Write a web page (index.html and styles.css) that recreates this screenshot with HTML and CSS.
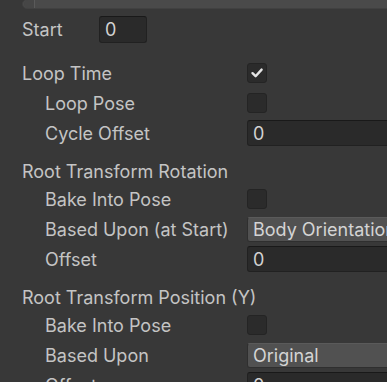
FILE: index.html
```html
<!DOCTYPE html>
<html lang="en">
<head>
    <meta charset="UTF-8">
    <title>Animation Clip Inspector</title>
    <link rel="stylesheet" href="styles.css">
</head>
<body>
    <div class="slider"><div class="slider-fill"></div></div>

    <div class="row start-row">
        <label class="label">Start</label>
        <div class="field small">0</div>
    </div>

    <div class="row heading">
        <label class="label">Loop Time</label>
        <div class="control">
            <div class="checkbox checked">
                <svg viewBox="0 0 20 20" width="20" height="20"><path d="M5.5 10.2 L8.6 13.2 L14.6 6.6" fill="none" stroke="#e4e4e4" stroke-width="2.4" stroke-linecap="round" stroke-linejoin="round"/></svg>
            </div>
        </div>
    </div>
    <div class="row child">
        <label class="label">Loop Pose</label>
        <div class="control"><div class="checkbox"></div></div>
    </div>
    <div class="row child">
        <label class="label">Cycle Offset</label>
        <div class="control"><div class="field">0</div></div>
    </div>

    <div class="section">
        <div class="title">Root Transform Rotation</div>
        <div class="row child">
            <label class="label">Bake Into Pose</label>
            <div class="control"><div class="checkbox"></div></div>
        </div>
        <div class="row child">
            <label class="label">Based Upon (at Start)</label>
            <div class="control"><div class="dropdown">Body Orientation</div></div>
        </div>
        <div class="row child">
            <label class="label">Offset</label>
            <div class="control"><div class="field">0</div></div>
        </div>
    </div>

    <div class="section">
        <div class="title">Root Transform Position (Y)</div>
        <div class="row child">
            <label class="label">Bake Into Pose</label>
            <div class="control"><div class="checkbox"></div></div>
        </div>
        <div class="row child">
            <label class="label">Based Upon</label>
            <div class="control"><div class="dropdown">Original</div></div>
        </div>
        <div class="row child">
            <label class="label">Offset</label>
            <div class="control"><div class="field">0</div></div>
        </div>
    </div>
</body>
</html>
```

FILE: styles.css
```css
html, body {
    margin: 0;
    height: 100%;
    overflow: hidden;
}
body {
    background-color: #383838;
    font-family: Inter, "Noto Sans", sans-serif;
    font-size: 18px;
    color: #c4c4c4;
    padding-left: 22px;
    width: 420px;
}
.slider {
    height: 10px;
    margin-top: -1px;
    margin-right: -40px;
    background-color: #4a4a4a;
    border: 1px solid #414141;
    border-radius: 6px;
    display: flex;
    box-sizing: border-box;
}
.slider-fill {
    width: 10px;
    margin-left: 1px;
    border-right: 1px solid #5a5a5a;
    background-color: #464646;
    border-radius: 5px 0 0 5px;
}
.row {
    display: flex;
    align-items: center;
    height: 30px;
}
.label {
    width: 225px;
    flex-shrink: 0;
    white-space: nowrap;
}
.start-row {
    margin-top: 5px;
    margin-bottom: 14px;
}
.start-row .label {
    width: 77px;
}
.child .label {
    padding-left: 23px;
    width: 202px;
}
.control {
    flex: 1;
    display: flex;
    align-items: center;
}
.section {
    margin-top: 12px;
}
.title {
    height: 24px;
    line-height: 24px;
    white-space: nowrap;
}
.checkbox {
    width: 20px;
    height: 20px;
    box-sizing: border-box;
    background-color: #2b2b2b;
    border: 1px solid #242424;
    border-radius: 3px;
    display: flex;
}
.checkbox svg {
    margin: -1px;
}
.field {
    height: 26px;
    line-height: 26px;
    box-sizing: border-box;
    flex: 1;
    min-width: 200px;
    padding-left: 5px;
    background-color: #2a2a2a;
    border: 1px solid #212121;
    border-top-color: #191919;
    border-radius: 3px;
    color: #d2d2d2;
}
.field.small {
    flex: none;
    min-width: 0;
    width: 48px;
    height: 27px;
    line-height: 25px;
}
.dropdown {
    height: 25px;
    line-height: 23px;
    box-sizing: border-box;
    flex: 1;
    min-width: 200px;
    padding-left: 5px;
    background-color: #515151;
    border: 1px solid #2f2f2f;
    border-top-color: #5a5a5a;
    border-radius: 3px;
    color: #d4d4d4;
    white-space: nowrap;
    overflow: hidden;
}
```
